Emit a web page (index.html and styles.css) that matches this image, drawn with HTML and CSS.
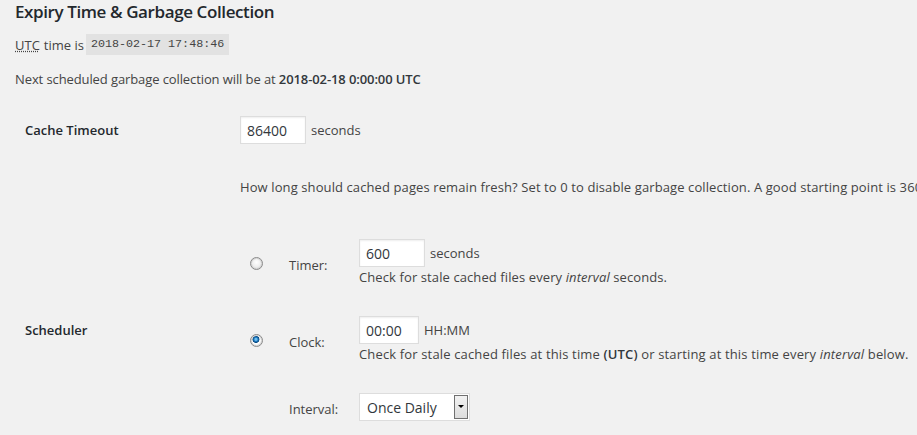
FILE: index.html
```html
<!DOCTYPE html>
<html lang="en">
<head>
<meta charset="utf-8">
<title>Expiry Time &amp; Garbage Collection</title>
<link rel="stylesheet" href="styles.css">
</head>
<body>
<div class="wrap">
  <h3 class="title">Expiry Time &amp; Garbage Collection</h3>
  <p class="utc"><abbr title="Coordinated Universal Time">UTC</abbr> time is <code>2018-02-17 17:48:46</code></p>
  <p class="next">Next scheduled garbage collection will be at <strong>2018-02-18 0:00:00 UTC</strong></p>

  <div class="form">
    <div class="row row-timeout">
      <div class="th">Cache Timeout</div>
      <div class="td field"><input class="text small" type="text" value="86400"><span class="unit">seconds</span></div>
    </div>
    <div class="row row-desc">
      <div class="th"></div>
      <div class="td desc">How long should cached pages remain fresh? Set to 0 to disable garbage collection. A good starting point is 3600 seconds.</div>
    </div>
    <div class="row row-sched">
      <div class="th">Scheduler</div>
      <div class="td sched">
        <div class="opt"><input class="radio" type="radio" name="sched"></div>
        <div class="lbl">Timer:</div>
        <div class="fld">
          <div class="field"><input class="text small" type="text" value="600"><span class="unit">seconds</span></div>
          <div class="hint">Check for stale cached files every <em>interval</em> seconds.</div>
        </div>

        <div class="opt"><input class="radio" type="radio" name="sched" checked></div>
        <div class="lbl">Clock:</div>
        <div class="fld">
          <div class="field"><input class="text clock" type="text" value="00:00"><span class="unit">HH:MM</span></div>
          <div class="hint wide">Check for stale cached files at this time <strong>(UTC)</strong> or starting at this time every <em>interval</em> below.</div>
        </div>

        <div class="opt"></div>
        <div class="lbl">Interval:</div>
        <div class="fld">
          <div class="select-box">
            <select class="select"><option>Once Daily</option></select>
            <span class="select-btn"></span>
          </div>
        </div>
      </div>
    </div>
  </div>
</div>
</body>
</html>
```

FILE: styles.css
```css
html, body {
  margin: 0;
  padding: 0;
  background: #f1f1f1;
  overflow: hidden;
}
body {
  font-family: "Open Sans", "Noto Sans", sans-serif;
  font-size: 13px;
  color: #444;
  line-height: 20px;
}
.wrap {
  padding: 0 15px;
  white-space: nowrap;
}
.title {
  margin: 0;
  font-size: 17px;
  line-height: 24px;
  font-weight: 600;
  letter-spacing: -0.4px;
  color: #23282d;
}
.utc {
  margin: 10px 0 0;
  display: flex;
  align-items: center;
  height: 21px;
}
abbr {
  text-decoration: underline dotted;
  margin-right: 4px;
}
.utc code {
  margin-left: 2px;
  font-family: "Liberation Mono", "DejaVu Sans Mono", monospace;
  font-size: 11.7px;
  line-height: 15px;
  padding: 3px 5px;
  background: #e2e2e2;
  color: #444;
}
.next {
  margin: 14px 0 0;
  letter-spacing: -0.1px;
}
.next strong { font-weight: 600; color: #32373c; }
.form {
  padding-left: 10px;
}
.row {
  display: grid;
  grid-template-columns: 215px auto;
  align-items: center;
}
.th {
  font-weight: 600;
  color: #23282d;
}
.row-timeout { margin-top: 27px; }
.row-desc { margin-top: 33px; }
.row-sched { margin-top: 42px; }
.desc { letter-spacing: 0.1px; }
.field {
  display: flex;
  align-items: center;
}
.text {
  box-sizing: border-box;
  height: 28px;
  margin: 0;
  padding: 3px 6px;
  border: 1px solid #ddd;
  box-shadow: inset 0 1px 2px rgba(0,0,0,.07);
  background: #fff;
  color: #32373c;
  font-family: inherit;
  font-size: 14px;
  outline: none;
}
.small { width: 66px; }
.clock { width: 60px; }
.unit { margin-left: 5px; }
.sched {
  display: grid;
  grid-template-columns: 49px 70px auto;
  row-gap: 29px;
  align-items: center;
}
.opt { padding-left: 10px; display: flex; align-items: center; }
.radio {
  -webkit-appearance: none;
  appearance: none;
  box-sizing: border-box;
  width: 13px;
  height: 13px;
  margin: 0;
  border-radius: 50%;
  border: 1px solid #8a8a8a;
  box-shadow: inset 0 0 0 1px #d6d6d6;
  background: radial-gradient(circle at 50% 40%, #ffffff 0%, #eeeeee 50%, #d2d2d2 100%);
}
.radio:checked {
  background: radial-gradient(circle at 45% 40%, #6fc0ee 0 1px, #1d78c0 2px, #0a4a80 3.2px, #ffffff 3.8px, #e6e6e6 100%);
}
.lbl { color: #444; padding-top: 3px; }
.hint { line-height: 20px; letter-spacing: 0.1px; }
.hint.wide { letter-spacing: 0.15px; }
.hint strong { font-weight: 600; color: #32373c; }
.select-box {
  position: relative;
  width: 111px;
  height: 28px;
}
.select {
  -webkit-appearance: none;
  appearance: none;
  box-sizing: border-box;
  width: 111px;
  height: 28px;
  margin: 0;
  padding: 2px 7px;
  border: 1px solid #ddd;
  background: #fff;
  color: #32373c;
  font-family: inherit;
  font-size: 14px;
  outline: none;
}
.select-btn {
  position: absolute;
  right: 2px;
  top: 2px;
  width: 14px;
  height: 24px;
  box-sizing: border-box;
  border: 1px solid #707070;
  background: linear-gradient(#f2f2f2, #dcdcdc);
}
.select-btn::after {
  content: "";
  position: absolute;
  left: 3px;
  top: 9px;
  border-left: 3px solid transparent;
  border-right: 3px solid transparent;
  border-top: 3px solid #000;
}
```
